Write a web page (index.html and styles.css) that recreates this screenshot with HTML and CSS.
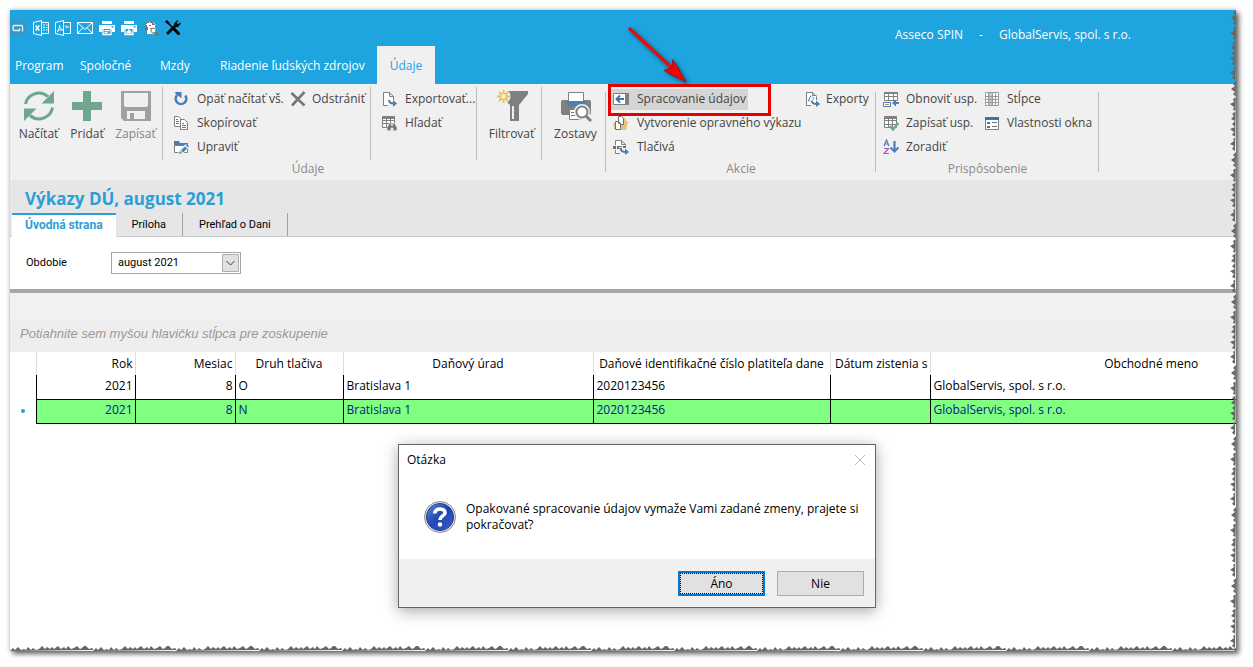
FILE: index.html
```html
<!DOCTYPE html>
<html lang="sk">
<head>
<meta charset="utf-8">
<title>Asseco SPIN - GlobalServis, spol. s r.o.</title>
<link rel="stylesheet" href="styles.css">
</head>
<body>
<main class="window">
  <header class="titlebar">
    <div class="quick">
      <button class="qbtn qmenu" aria-label="Ponuka"><svg width="16" height="16" viewBox="0 0 16 16"><path fill="#3797c4" d="M0 0h16v16H0z"/><path fill="none" stroke="#d9f1fc" stroke-width="1.4" d="M12.500 11.500V6.500q0-1-1-1h-7q-1.500 0-1.500 1.500v2q0 1.500 1.500 1.500h5V8.500"/></svg></button>
      <button class="qbtn" aria-label="Excel"><svg width="16" height="16" viewBox="0 0 16 16"><path fill="none" stroke="#fff" d="M.5 2.500l8-2v15l-8-2zM8.500 2.500h7v11h-7M10 5h2M13 5h1.500M10 7.500h2M13 7.500h1.500M10 10h2M13 10h1.500"/><path stroke="#fff" stroke-width="1.400" d="M2.700 5.500l3.600 5M6.300 5.500l-3.600 5"/></svg></button>
      <button class="qbtn" aria-label="PDF"><svg width="16" height="16" viewBox="0 0 16 16"><path fill="none" stroke="#fff" d="M.5 2.500l8-2v15l-8-2zM8.500 2.500h7v11h-7M10.500 7h3.500M11 5.500v1.500"/><path fill="none" stroke="#fff" d="M2 11.500c2-1 2.500-4 2.500-6.500.3 3 1.500 4 3.500 5-2-.6-4 0-6 1.500z"/></svg></button>
      <button class="qbtn" aria-label="E-mail"><svg width="16" height="16" viewBox="0 0 16 16"><path fill="none" stroke="#fff" d="M.5 2.500h15v11H.5zM.5 2.500L8 9.500l7.500-7M.5 13.500l5.500-6M15.500 13.500l-5.500-6"/></svg></button>
      <button class="qbtn" aria-label="Tlač"><svg width="16" height="16" viewBox="0 0 16 16"><path fill="#fff" d="M3 1h10v3H3zM0 5h16v7h-3V9H3v3H0z"/><path fill="none" stroke="#fff" stroke-width="1.300" d="M4 9v5.500h8V9M5.500 10.700h5M5.500 12.700h3"/><path fill="#1ea4df" d="M12.500 6h2v1.500h-2z"/></svg></button>
      <button class="qbtn" aria-label="Rýchla tlač"><svg width="16" height="16" viewBox="0 0 16 16"><path fill="#fff" d="M3 1h10v3H3zM0 5h16v7h-3V9H3v3H0z"/><path fill="none" stroke="#fff" stroke-width="1.300" d="M4 9v5.500h8V9"/><path fill="#fff" d="M7 9.500h2v1.500h1l1 2.500H5l1-2.500h1z"/><path fill="#1ea4df" d="M12.500 6h2v1.500h-2z"/></svg></button>
      <button class="qbtn" aria-label="Náhľad"><svg width="16" height="16" viewBox="0 0 16 16"><path fill="#fff" d="M3 2h7l3 3v4l-3 5H3z"/><path fill="none" stroke="#707070" stroke-dasharray="4 1" d="M3.500 14V2.500h6l3 3V8"/><path fill="#707070" d="M2 7h3v3H2zM6 5h2v1H6zM7 8h2v1H7zM9 2v3h3z"/><circle cx="10.500" cy="10.500" r="2.500" fill="#dff" stroke="#8a7068"/><path stroke="#707070" stroke-width="2" d="M12.500 12.500l3 3"/></svg></button>
      <button class="qbtn" aria-label="Nástroje"><svg width="16" height="16" viewBox="0 0 16 16"><path stroke="#000" stroke-width="3" stroke-linecap="round" d="M3 13L10 6M13.500 13.500L9 9"/><path stroke="#000" stroke-width="1.500" d="M1 1l8 8"/><path fill="#000" d="M0 2l2-2 3 3-1.500 1.500zM9 3.500L12 .5l1.500.300-2 2 1.500 1.500 2.300-2 .2 1.700-2.500 3-3 .2z"/></svg></button>
    </div>
    <div class="apptitle"><span>Asseco SPIN</span><span>-</span><span>GlobalServis, spol. s r.o.</span></div>
  </header>
  <nav class="menu">
    <button class="m1">Program</button><button class="m2">Spoločné</button><button class="m3">Mzdy</button><button class="m4">Riadenie ľudských zdrojov</button><button class="active">Údaje</button>
  </nav>

  <section class="ribbon">
    <div class="group">
      <div class="cells">
        <div class="cell bigs">
          <button class="big"><svg width="32" height="32" viewBox="0 0 32 32"><path fill="none" stroke="#6fa78e" stroke-width="3" d="M2.500 14C4 5 16-1 25 6.500M29.500 17.500C28 27 16 33 7 25.500"/><path fill="#6fa78e" d="M31 1v12.500H18.500zM1 31V18.500h12.500z"/></svg>Načítať</button>
          <button class="big"><svg width="32" height="32" viewBox="0 0 32 32"><path fill="#6fa78e" d="M12 1h8v11h11v8H20v11h-8V20H1v-8h11z"/></svg>Pridať</button>
          <button class="big off"><svg width="32" height="32" viewBox="0 0 32 32"><path fill="#a0a0a0" fill-rule="evenodd" d="M1 1h30v30H4l-3-3zM4 3v12q0 2 2 2h20q2 0 2-2V3zM7 21v8h3v-6h4v6h11v-8z"/></svg>Zapísať</button>
        </div>
        <div class="cell two">
          <button class="item"><svg width="16" height="16" viewBox="0 0 16 16"><path fill="none" stroke="#4a7fb5" stroke-width="2.600" d="M3.800 4.500a5.300 5.300 0 1 0 8.400 0"/><path fill="#4a7fb5" d="M2 1h6.500v6.500L6.500 5.500 3 4z"/></svg>Opäť načítať vš.</button>
          <button class="item tight"><svg width="16" height="16" viewBox="0 0 16 16"><path stroke="#777" stroke-width="2.600" d="M1.500 2l13 12.500M14.500 1L2 14.500"/></svg>Odstrániť</button>
          <button class="item"><svg width="16" height="16" viewBox="0 0 16 16"><path fill="#fff" stroke="#808080" d="M1.500 1.500h4l2 2v8h-6z"/><path fill="#fff" stroke="#808080" d="M7.500 4.500h4l3 3v7h-7z"/><path stroke="#4a7fb5" d="M3 4.500h2M3 6.500h3M3 8.500h3M9 8.500h2M9 10.500h4M9 12.500h4"/></svg>Skopírovať</button><span></span>
          <button class="item"><svg width="16" height="16" viewBox="0 0 16 16"><path fill="#4a7fb5" d="M1 2h5l1 2h8v3H1z"/><path fill="#fff" stroke="#808080" d="M1.500 6.500h13v7h-13z"/><path fill="#f0f0f0" d="M5 15l1-4 7-6 3 3-6 7z"/><path fill="#4a7fb5" d="M6 15l1-3 2 2zM8 11.500l4-4 2 2-4 4zM13 6.500l1-1 2 2-1 1z"/></svg>Upraviť</button>
        </div>
        <div class="cell one export">
          <button class="item"><svg width="16" height="16" viewBox="0 0 16 16"><path fill="#fff" stroke="#808080" d="M7 14.500H2.500v-13h6l4 4V9M8.500 1.500v4h4"/><path fill="none" stroke="#4a7fb5" stroke-width="2" d="M8 9q0 3.500 5 3.500"/><path fill="#4a7fb5" d="M12 9l4 3.500-4 3.500z"/></svg>Exportovať...</button>
          <button class="item"><svg width="16" height="16" viewBox="0 0 16 16"><path fill="#fff" stroke="#808080" d="M1.500 1.500h12v11h-12zM1 5.500h13M1 8.500h13M5.500 2v11M9.500 2v11"/><path fill="#808080" d="M1 1h13v3H1z"/><path fill="#777" stroke="#f0f0f0" stroke-width=".6" d="M6 15.700v-3l2-4h2.500v2h1v-2H14l2 4v3h-4V13h-2v2.700z"/></svg>Hľadať</button>
        </div>
        <div class="cell filter"><button class="big"><svg width="32" height="32" viewBox="0 0 32 32"><path fill="#808080" d="M10 1h22v3l-9 11v16h-9V15L9 10z"/><path fill="#f0f0f0" d="M16 16h2v13h-2z"/><circle cx="7.500" cy="6.500" r="7" fill="#f0f0f0"/><path stroke="#e5c06c" stroke-width="1.800" d="M7.500 0v13M1 6.500h13M3 2l9 9M12 2l-9 9"/><circle cx="7.500" cy="6.500" r="3.200" fill="#fbeecb" stroke="#e5c06c" stroke-width="1.500"/></svg>Filtrovať</button></div>
        <div class="cell reports"><button class="big"><svg width="32" height="32" viewBox="0 0 32 32"><path fill="#808080" d="M1 12q0-2 2-2h26q2 0 2 2v11q0 2-2 2H3q-2 0-2-2z"/><path fill="#fff" stroke="#808080" d="M8.500 2.500h15V12h-15z"/><path fill="#4a7fb5" d="M7 11h18v5H7z"/><path fill="#fff" stroke="#808080" d="M9.500 19.500h13v10h-13z"/><path stroke="#4a7fb5" d="M11 22.500h5M11 25.500h5"/><circle cx="22" cy="22" r="6" fill="#fff" stroke="#f0f0f0" stroke-width="4"/><circle cx="22" cy="22" r="5.500" fill="#fff" stroke="#808080" stroke-width="2"/><path stroke="#808080" stroke-width="3" d="M26 26l5 5"/></svg>Zostavy</button></div>
      </div>
      <div class="caption">Údaje</div>
    </div>
    <div class="group actions">
      <div class="cells">
        <div class="cell act">
          <button class="item hot"><svg width="16" height="16" viewBox="0 0 16 16"><path fill="#fff" stroke="#808080" d="M.5 2.500h15v11H.5z"/><path fill="#808080" d="M12 2h4v12h-4z"/><path fill="none" stroke="#3d74ad" stroke-width="2" d="M11 8H4M7 4.500L3.500 8 7 11.500"/></svg>Spracovanie údajov</button>
          <button class="item"><svg width="16" height="16" viewBox="0 0 16 16"><path fill="#e7c27a" d="M7 3h5l1 3h2l-2 9H7zM0 8h3v6H1z"/><path fill="#fff" stroke="#707070" d="M5.500 7V1.500h3l2 2v6H8"/><path fill="#fff" stroke="#707070" d="M2.500 6.500h3l2 2v6h-5zM5.500 6.500v2h2"/></svg>Vytvorenie opravného výkazu</button>
          <button class="item"><svg width="16" height="16" viewBox="0 0 16 16"><path fill="#fff" stroke="#808080" d="M2.500 6V1.500h6l4 4V9M8.500 1.500v4h4M2.500 11v3.500H7"/><path fill="#707070" d="M0 7h3v3H0zM4 7h5v1H6v1h3v1H4zM10 7h3v2h-3z"/><path fill="none" stroke="#4a7fb5" stroke-width="2" d="M8 10q0 3 5 3"/><path fill="#4a7fb5" d="M12 9.500l4 3.500-4 3z"/></svg>Tlačivá</button>
        </div>
        <div class="cell exp">
          <button class="item"><svg width="16" height="16" viewBox="0 0 16 16"><path fill="#fff" stroke="#808080" d="M7 14.500H2.500v-13h6l4 4V9M8.500 1.500v3h4"/><path fill="none" stroke="#4a7fb5" d="M4 10.500l3-6M8 5.500l2 2-2 2M6 9.500v1"/><path fill="none" stroke="#4a7fb5" stroke-width="2" d="M8 10q0 3 5 3"/><path fill="#4a7fb5" d="M12 9.500l4 3.500-4 3z"/></svg>Exporty</button>
        </div>
      </div>
      <div class="caption">Akcie</div>
    </div>
    <div class="group custom">
      <div class="cells">
        <div class="cell cust">
          <button class="item"><svg width="16" height="16" viewBox="0 0 16 16"><path fill="#fff" stroke="#808080" d="M1.500 1.500h13v8h-13zM1 5.500h14M5.500 2v8M10.500 2v8"/><path fill="#808080" d="M1 1h14v2H1z"/><path fill="#fff" stroke="#4a7fb5" d="M.5 11.500h7v4h-7z"/><path stroke="#c9824b" d="M2 13.500h4"/><path fill="#4a7fb5" d="M9 12l4-3.500V11h3v2h-3v2.500z"/></svg>Obnoviť usp.</button>
          <button class="item"><svg width="16" height="16" viewBox="0 0 16 16"><path fill="#fff" stroke="#9a9a9a" d="M1.500 1.500h13v13h-13zM1 5.500h13M1 8.500h13M1 11.500h13M8.500 1v13M11.500 1v13"/><path fill="#b4c8dc" d="M5 2h3v12H5z"/><path stroke="#9a9a9a" d="M4.500 1v13M1 5.500h13M1 8.500h13M1 11.500h13"/></svg>Stĺpce</button>
          <button class="item"><svg width="16" height="16" viewBox="0 0 16 16"><path fill="#fff" stroke="#808080" d="M1.500 1.500h12v11h-12zM1 5.500h13M1 9.500h13M5.500 2v11M9.500 2v11"/><path fill="#808080" d="M1 1h13v3H1z"/><path fill="none" stroke="#6fa78e" stroke-width="2.400" d="M7 11l3 3.500 5.500-6.500"/></svg>Zapísať usp.</button>
          <button class="item"><svg width="16" height="16" viewBox="0 0 16 16"><path fill="#fff" stroke="#808080" d="M1.500 2.500h13v12h-13z"/><path fill="#3d74ad" d="M1 2h14v3H1z"/><path fill="#707070" d="M3 7h3v2H3zM3 11h3v2H3zM8 7h5v1H8zM8 11h5v1H8z"/></svg>Vlastnosti okna</button>
          <button class="item"><svg width="16" height="16" viewBox="0 0 16 16"><path fill="none" stroke="#4a7fb5" stroke-width="1.200" d="M1 7l2.500-6L6 7M2 5h3"/><path fill="none" stroke="#a35fb0" stroke-width="1.200" d="M1 9.500h4.500L1 14.500h5"/><path fill="none" stroke="#4a7fb5" stroke-width="2.200" d="M11.500 2v10M7.500 8.500l4 4 4-4"/></svg>Zoradiť</button>
        </div>
      </div>
      <div class="caption">Prispôsobenie</div>
    </div>
  </section>

  <section class="page-head">
    <h1>Výkazy DÚ, august 2021</h1>
    <div class="tabs" role="tablist"><button role="tab" class="on">Úvodná strana</button><button role="tab">Príloha</button><button role="tab">Prehľad o Dani</button></div>
  </section>
  <form class="filterbar">
    <label for="period">Obdobie</label>
    <div class="pick"><select id="period"><option>august 2021</option></select><svg class="chev" width="17" height="18" viewBox="0 0 17 18"><path fill="#e1e1e1" stroke="#adadad" d="M.5.500h16v17H.5z"/><path fill="none" stroke="#444" d="M4.500 7l4 4 4-4"/></svg></div>
  </form>
  <p class="grouping">Potiahnite sem myšou hlavičku stĺpca pre zoskupenie</p>
  <table class="grid">
    <colgroup><col class="c0"><col class="c1"><col class="c2"><col class="c3"><col class="c4"><col class="c5"><col class="c6"><col></colgroup>
    <thead><tr><td></td><th class="num">Rok</th><th class="num">Mesiac</th><th>Druh tlačiva</th><th>Daňový úrad</th><th>Daňové identifikačné číslo platiteľa dane</th><th class="num">Dátum zistenia s</th><th class="last">Obchodné meno</th></tr></thead>
    <tbody>
      <tr><td class="mark"></td><td class="num">2021</td><td class="num">8</td><td>O</td><td>Bratislava 1</td><td>2020123456</td><td></td><td>GlobalServis, spol. s r.o.</td></tr>
      <tr class="sel"><td class="mark"><i class="dot"></i></td><td class="num">2021</td><td class="num">8</td><td>N</td><td>Bratislava 1</td><td>2020123456</td><td></td><td>GlobalServis, spol. s r.o.</td></tr>
    </tbody>
  </table>

  <div class="frame"></div>
  <svg class="arrow" width="66" height="64" viewBox="0 0 66 64"><path stroke="#e01010" stroke-width="3.500" stroke-linecap="round" d="M4 4l42 39"/><path fill="#f00" stroke="#a50d12" d="M60 57L38 45.500l8-3 1-8z"/></svg>

  <div class="dialog" role="dialog" aria-labelledby="dlg">
    <div class="dlg-top"><span id="dlg">Otázka</span><button class="close" aria-label="Zavrieť"><svg width="12" height="12" viewBox="0 0 12 12"><path stroke="#b8b8b8" d="M1 1l10 10M11 1L1 11"/></svg></button></div>
    <div class="dlg-body">
      <svg width="32" height="32" viewBox="0 0 32 32"><defs><linearGradient id="ball" x1="0" y1="0" x2="1" y2="1"><stop offset="0" stop-color="#5f8be8"/><stop offset=".5" stop-color="#1e3fae"/><stop offset="1" stop-color="#3f66dc"/></linearGradient></defs><circle cx="16" cy="16" r="15.500" fill="#e8e8e8" stroke="#8a8a8a"/><circle cx="16" cy="16" r="13.600" fill="url(#ball)" stroke="#27408f"/><path fill="#2d50c0" opacity=".6" d="M3 19q13 1 25-7a13 13 0 0 1-25 7z"/><path fill="none" stroke="#fff" stroke-width="3.600" d="M10.800 12.500c.3-6.500 10.700-5.500 10.200-.5-.3 3-5 3-5 7"/><circle cx="16" cy="23.500" r="2.200" fill="#fff"/></svg>
      <p>Opakované spracovanie údajov vymaže Vami zadané zmeny, prajete si pokračovať?</p>
    </div>
    <div class="dlg-foot"><button class="btn primary">Áno</button><button class="btn">Nie</button></div>
  </div>

  <svg class="torn-right" width="6" height="100%" aria-hidden="true"><defs><pattern id="tr" width="6" height="71" patternUnits="userSpaceOnUse"><path fill="#666" d="M6 0L3 3l2 2-4 3 4 3-2 2 3 3-3 2 1 3-4 2 4 3-1 3 3 1-4 3 2 2-3 3 4 2-3 3 3 3-5 2 4 3-2 3 4 2-3 2 1 2-4 3 4 2-2 3 3 2z"/></pattern></defs><rect width="6" height="100%" fill="url(#tr)"/></svg>
  <svg class="torn-bottom" width="100%" height="5" aria-hidden="true"><defs><pattern id="tb" width="83" height="5" patternUnits="userSpaceOnUse"><path fill="#666" d="M0 5l3-3 2 2 3-3 3 3 3-1 2 1 2-3 3 3 2-2 3 2 3-1 3-3 3 3 2-2 3 2 2-2 2 2 4-3 3 3 3-2 2 2 2-3 3 3 3-1 3-2 3 3 2-1 3-3 4 4 3-1 2 2z"/></pattern></defs><rect width="100%" height="5" fill="url(#tb)"/></svg>
</main>
</body>
</html>
```
FILE: styles.css
```css
* { box-sizing: border-box; }
body {
  margin: 0;
  min-height: 100vh;
  padding: 10px 17px 16px 10px;
  display: flex;
  background: #fff;
  font: 12px/16px "Open Sans", "Noto Sans", sans-serif;
  color: #000;
}
button { font: inherit; color: inherit; background: none; border: 0; padding: 0; margin: 0; }
svg { display: block; flex: none; }
h1, p { margin: 0; }

.window {
  position: relative;
  flex: 1;
  min-width: 0;
  background: #fff;
  box-shadow: 0 0 5px rgba(0,0,0,.25), 3px 3px 5px rgba(0,0,0,.55);
}

/* title bar */
.titlebar { display: flex; align-items: center; justify-content: space-between; height: 36px; background: #1ea4df; color: #fff; }
.quick { display: flex; gap: 6px; }
.qmenu { margin-right: 1px; }
.apptitle { display: flex; gap: 16px; padding: 13px 105px 0 0; }

/* menu */
.menu { display: flex; height: 38px; background: #1ea4df; color: #fff; }
.menu button { padding: 2px 0 0; text-align: left; white-space: nowrap; }
.menu .m1 { width: 70px; padding-left: 5px; }
.menu .m2 { width: 80px; }
.menu .m3 { width: 60px; }
.menu .m4 { width: 157px; }
.menu .active { width: 58px; text-align: center; background: #f0f0f0; color: #1ea4df; }

/* ribbon */
.ribbon { display: flex; height: 97px; padding-top: 3px; background: #f0f0f0; color: #444; border-bottom: 1px solid #e6e6e6; }
.group { display: flex; flex-direction: column; position: relative; }
.group::after { content: ""; position: absolute; right: 0; top: 5px; height: 80px; border-right: 1px solid #bdbdbd; }
.cells { display: flex; height: 73px; }
.cell { border-right: 1px solid #bdbdbd; display: grid; grid-auto-rows: 24px; align-content: start; }
.reports, .act, .exp, .cust { border-right: 0; }
.caption { text-align: center; color: #8a8a8a; line-height: 18px; }
.big { display: flex; flex-direction: column; align-items: center; gap: 4px; padding-top: 3px; white-space: nowrap; }
.off { color: #858585; }
.bigs { grid-template-columns: 49px 48px 49px; width: 153px; padding-left: 4px; }
.bigs, .filter, .reports { grid-auto-rows: 72px; }
.two { grid-template-columns: 118px 1fr; width: 208px; }
.export { width: 106px; }
.filter { width: 65px; padding-left: 5px; }
.reports { width: 64px; padding-left: 3px; }
.item { display: flex; align-items: center; gap: 8px; padding-left: 10px; white-space: nowrap; text-align: left; }
.two .tight { gap: 6px; padding-left: 9px; }
.act { width: 192px; }
.act .item { padding-left: 7px; }
.exp { width: 78px; }
.exp .item { padding-left: 6px; gap: 6px; }
.act .hot { justify-self: start; align-self: center; height: 21px; margin-left: 5px; padding: 0 2px; background: #d5d5d5; }
.custom { width: 223px; }
.cust { grid-template-columns: 101px 1fr; }
.cust .item { padding-left: 7px; gap: 7px; }

/* page heading and tabs */
.page-head { background: #e6e6e6; border-bottom: 1px solid #ccc; }
h1 { padding: 6px 15px 0; height: 32px; font-size: 17px; line-height: 24px; font-weight: 700; color: #2a9fd6; }
.tabs { display: flex; height: 23px; padding-left: 2px; font: 11px/16px Roboto, sans-serif; }
.tabs button { padding: 0 16px; border-right: 1px solid #a0a0a0; white-space: nowrap; }
.tabs .on { padding: 0 13px 2px; margin-bottom: -1px; background: #fff; border-right: 0; border-top: 2px solid #2a9fd6; color: #2a9fd6; font-size: 12px; font-weight: 700; }

.filterbar { display: flex; align-items: center; height: 56px; padding-left: 16px; border-bottom: 4px solid #a6a6a6; font: 11px/16px Roboto, sans-serif; }
.filterbar label { width: 85px; }
.pick { position: relative; width: 130px; }
.pick select { appearance: none; display: block; width: 100%; height: 22px; padding: 0 6px; border: 1px solid #a6a6a6; border-radius: 0; background: #fff; font: inherit; color: #000; }
.chev { position: absolute; right: 2px; top: 2px; pointer-events: none; }

.grouping { padding: 31px 10px 8px; background: linear-gradient(#f1f1f1, #f1f1f1 27px, #eee 27px); font: italic 13px/20px "Liberation Sans", sans-serif; color: #999; }

/* data grid */
.grid { width: 100%; table-layout: fixed; border-collapse: collapse; }
.c0 { width: 26px; } .c1 { width: 99px; } .c2 { width: 100px; } .c3 { width: 108px; } .c4 { width: 250px; } .c5 { width: 237px; } .c6 { width: 100px; }
.grid th, .grid td { height: 24px; padding: 0 3px; font-weight: 400; white-space: nowrap; overflow: hidden; text-align: left; }
.grid thead th, .grid thead td { height: 23px; }
.grid thead th { text-align: center; border-left: 1px solid #ddd; }
.grid tbody td { border-left: 1px solid #000; border-bottom: 1px solid #000; padding-bottom: 2px; }
.grid tbody .mark { border: 0; padding: 0; }
.grid .num, .grid thead .num { text-align: right; padding-right: 2px; }
.grid thead .last { padding-left: 139px; }
.sel td { background: #80ff80; color: #00208c; }
.grid .sel .mark { background: #fff; }
.dot { display: block; width: 4px; height: 4px; margin-left: 11px; border-radius: 50%; background: #1ea4df; }

/* annotation */
.frame { position: absolute; left: 598px; top: 74px; width: 163px; height: 32px; border: 3px solid #e60000; pointer-events: none; }
.arrow { position: absolute; left: 616px; top: 15px; filter: drop-shadow(2px 2px 2px rgba(0,0,0,.5)); }

/* dialog */
.dialog { position: absolute; left: 388px; top: 434px; width: 478px; border: 1px solid #666; background: #fff; box-shadow: 0 3px 14px rgba(0,0,0,.35); }
.dlg-top { display: flex; justify-content: space-between; align-items: center; height: 30px; padding: 0 9px 0 8px; }
.dlg-body { display: flex; gap: 10px; align-items: center; height: 84px; padding: 0 8px 0 25px; }
.dlg-foot { display: flex; justify-content: flex-end; gap: 12px; padding: 12px 11px 11px; background: #f0f0f0; }
.btn { width: 87px; height: 25px; border: 1px solid #adadad; background: #e1e1e1; }
.primary { border: 2px solid #0078d7; outline: 1px dotted #000; outline-offset: -3px; }

/* torn edges */
.torn-right { position: absolute; right: 0; top: 0; }
.torn-bottom { position: absolute; left: 0; bottom: 0; }
```
